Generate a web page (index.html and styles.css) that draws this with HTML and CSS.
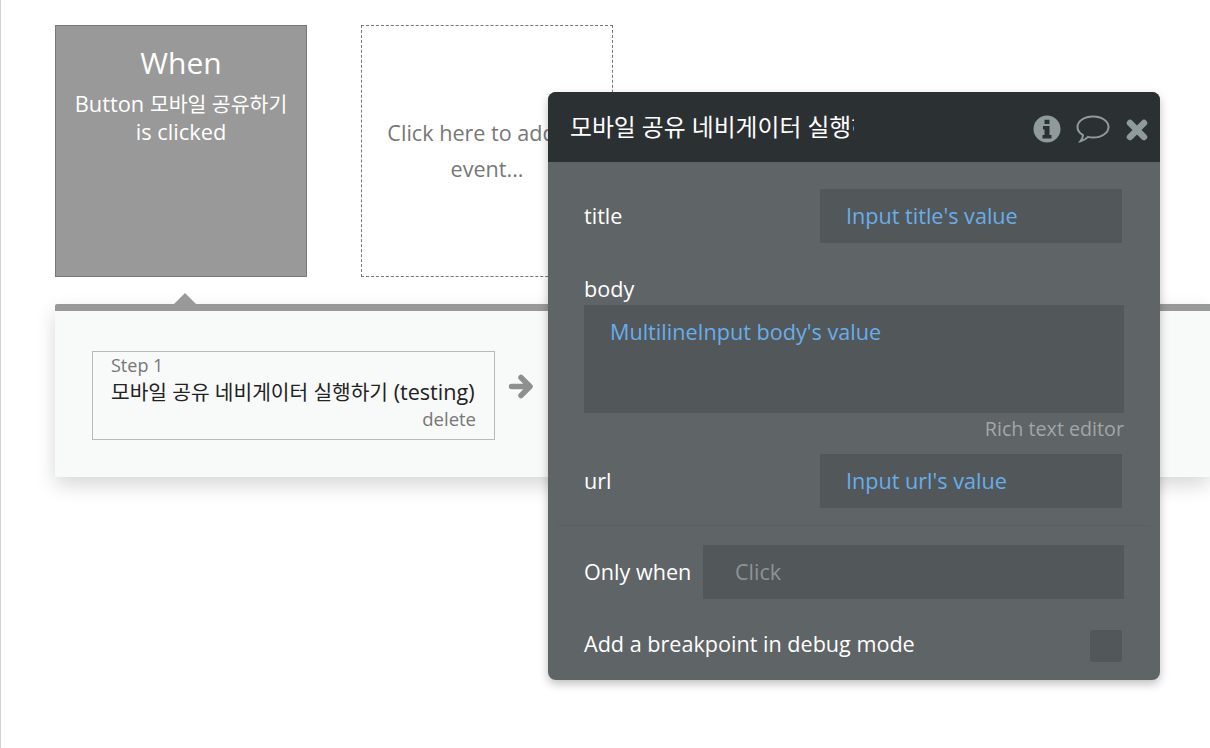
FILE: index.html
```html
<!DOCTYPE html>
<html lang="en">
<head>
    <meta charset="UTF-8">
    <meta name="viewport" content="width=device-width, initial-scale=1.0">
    <title>Workflow editor</title>
    <link rel="stylesheet" href="styles.css">
</head>
<body>
    <div class="canvas">
        <div class="events">
            <div class="event-card">
                <div class="event-when">When</div>
                <div class="event-desc">Button <span class="ko-desc">모바일 공유하기</span><br>is clicked</div>
            </div>
            <div class="event-add">
                <div class="event-add-text">Click here to add an event...</div>
            </div>
        </div>

        <div class="steps">
            <div class="steps-pointer"></div>
            <div class="step-box">
                <div class="step-num">Step 1</div>
                <div class="step-name"><span class="ko-step">모바일 공유 네비게이터 실행하기</span> (testing)</div>
                <div class="step-delete">delete</div>
            </div>
            <svg class="step-arrow" width="26" height="26" viewBox="0 0 26 26">
                <path d="M3.500 13.500H20M13 4.500l9 9-9 9" fill="none" stroke="#8f8f8f" stroke-width="5.500" stroke-linecap="round" stroke-linejoin="round"/>
            </svg>
        </div>

        <div class="popup">
            <div class="popup-head">
                <div class="popup-title">모바일 공유 네비게이터 실행하기</div>
                <div class="popup-icons">
                    <svg width="28" height="28" viewBox="0 0 28 28">
                        <circle cx="14" cy="14" r="13.500" fill="#8f9a9c"/>
                        <path d="M11.500 4.800h5v4.200h-5zM10 11h6.500v9H18.500v3.500H9.500V20h2v-5.500H10z" fill="#2b3033"/>
                    </svg>
                    <svg width="34" height="30" viewBox="0 0 34 30">
                        <path d="M17 2.500c8.500 0 15.500 4.500 15.500 10.500S25.500 23.500 17 23.500c-1.800 0-3.500-.2-5-.6-1.800 2-4.200 3.600-7.500 4.300 1.300-1.500 2.300-3.500 2.500-6C3.800 19.300 1.500 16.400 1.500 13 1.500 7 8.500 2.500 17 2.500z" fill="none" stroke="#8f9a9c" stroke-width="2"/>
                    </svg>
                    <svg class="icon-close" width="22" height="22" viewBox="0 0 22 22">
                        <path d="M4 4l14 14M18 4L4 18" stroke="#8f9a9c" stroke-width="6.500" stroke-linecap="round"/>
                    </svg>
                </div>
            </div>
            <div class="popup-body">
                <div class="row">
                    <span class="label">title</span>
                    <div class="field field-short dynamic">Input title's value</div>
                </div>
                <div class="label label-body">body</div>
                <div class="field field-area dynamic">MultilineInput body's value</div>
                <div class="rich-link">Rich text editor</div>
                <div class="row">
                    <span class="label">url</span>
                    <div class="field field-short dynamic">Input url's value</div>
                </div>
                <div class="divider"></div>
                <div class="row">
                    <span class="label">Only when</span>
                    <div class="field field-when">Click</div>
                </div>
                <div class="row row-debug">
                    <span class="label">Add a breakpoint in debug mode</span>
                    <div class="checkbox"></div>
                </div>
            </div>
        </div>
    </div>
</body>
</html>
```

FILE: styles.css
```css
*{
    margin: 0px;
    padding: 0px;
    box-sizing: border-box;
}

body{
    font-family: "Open Sans", "Noto Sans CJK KR", sans-serif;
    background-color: #fff;
    overflow: hidden;
}

.canvas{
    position: relative;
    width: 1210px;
    height: 748px;
    overflow: hidden;
    border-left: 1px solid #d4d4d4;
    padding-top: 25px;
}

.events{
    display: flex;
    gap: 54px;
    padding-left: 54px;
}

.event-card{
    width: 252px;
    height: 252px;
    background-color: #999;
    border: 1px solid #777;
    color: #fff;
    text-align: center;
    padding-top: 17px;
}
.event-when{
    font-size: 30px;
    line-height: 40px;
}
.event-desc{
    font-size: 21.800px;
    line-height: 28px;
    margin-top: 7px;
}
.ko-desc{
    font-size: 20.500px;
}

.event-add{
    width: 252px;
    height: 252px;
    border: 1px dashed #777;
    display: flex;
    justify-content: center;
    padding-top: 89px;
}
.event-add-text{
    width: 220px;
    color: #777;
    font-size: 21.600px;
    line-height: 36px;
    text-align: center;
}

.steps{
    position: relative;
    margin: 27px 0px 0px 54px;
    height: 173px;
    background-color: #f8f9f9;
    border-top: 7px solid #999;
    border-top-left-radius: 2px;
    box-shadow: 0px 8px 20px rgba(0, 0, 0, 0.16);
    display: flex;
    align-items: flex-start;
    padding: 40px 0px 0px 37px;
}
.steps-pointer{
    position: absolute;
    left: 118px;
    top: -18px;
    width: 24px;
    height: 12px;
    background-color: #999;
    clip-path: polygon(50% 0, 100% 100%, 0 100%);
}

.step-box{
    width: 403px;
    height: 89px;
    border: 1px solid #b9b9b9;
    padding: 2px 18px 0px 18px;
}
.step-num{
    font-size: 18px;
    line-height: 22px;
    margin-bottom: 1px;
    color: #777;
}
.step-name{
    font-size: 21.600px;
    line-height: 30px;
    color: #222;
    white-space: nowrap;
}
.ko-step{
    font-size: 20.300px;
}
.step-delete{
    font-size: 18.500px;
    line-height: 24px;
    color: #777;
    text-align: right;
}
.step-arrow{
    margin: 22px 0px 0px 13px;
}

.popup{
    position: absolute;
    left: 547px;
    top: 92px;
    width: 612px;
    height: 588px;
    background-color: #5f6466;
    border-radius: 8px;
    box-shadow: 0px 4px 10px rgba(0, 0, 0, 0.25);
    color: #fff;
    overflow: hidden;
}
.popup-head{
    height: 70px;
    background-color: #2b3033;
    display: flex;
    align-items: center;
    justify-content: space-between;
    padding: 0px 11px 0px 22px;
}
.popup-title{
    width: 284px;
    font-size: 23.800px;
    line-height: 70px;
    white-space: nowrap;
    overflow: hidden;
}
.popup-icons{
    display: flex;
    align-items: center;
    gap: 15px;
    margin-top: 4px;
}
.icon-close{
    margin-left: 1px;
    margin-right: 1px;
    margin-top: 2px;
}

.popup-body{
    padding: 27px 36px 0px 36px;
}
.row{
    display: flex;
    align-items: center;
    justify-content: space-between;
}
.label{
    font-size: 21.600px;
    line-height: 28px;
}
.label-body{
    margin-top: 32px;
    height: 30px;
}
.field{
    background-color: #525759;
    font-size: 21.600px;
    line-height: 54px;
}
.dynamic{
    color: #68aeea;
}
.field-short{
    width: 302px;
    height: 54px;
    margin-right: 2px;
    padding-left: 26px;
}
.field-area{
    width: 540px;
    height: 108px;
    padding-left: 26px;
}
.rich-link{
    width: 540px;
    text-align: right;
    font-size: 19.700px;
    line-height: 30px;
    margin: 1px 0px 10px 0px;
    color: #a3a6a7;
}
.divider{
    height: 1px;
    margin: 17px -26px 19px -26px;
    background-color: #595e60;
}
.field-when{
    width: 421px;
    height: 54px;
    padding-left: 32px;
    color: #8f9394;
}
.row-debug{
    margin-top: 31px;
}
.row-debug .label{
    margin-top: -4px;
}
.checkbox{
    width: 32px;
    height: 32px;
    margin-right: 2px;
    background-color: #525759;
    border-radius: 2px;
}
```
